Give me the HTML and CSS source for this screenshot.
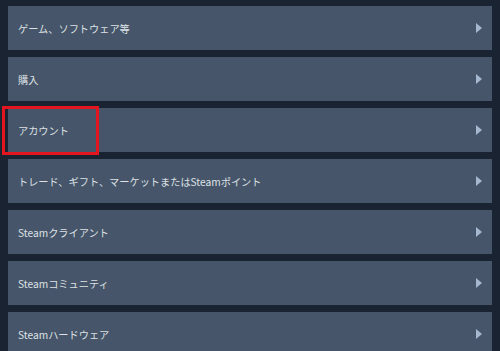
FILE: index.html
```html
<!DOCTYPE html>
<html lang="ja">
<head>
<meta charset="utf-8">
<link rel="stylesheet" href="styles.css">
</head>
<body>
<div class="list">
  <div class="row"><span class="label">ゲーム、ソフトウェア等</span><span class="arrow"></span></div>
  <div class="row"><span class="label">購入</span><span class="arrow"></span></div>
  <div class="row highlighted"><span class="label">アカウント</span><span class="arrow"></span><span class="mark"></span></div>
  <div class="row"><span class="label">トレード、ギフト、マーケットまたはSteamポイント</span><span class="arrow"></span></div>
  <div class="row"><span class="label">Steamクライアント</span><span class="arrow"></span></div>
  <div class="row"><span class="label">Steamコミュニティ</span><span class="arrow"></span></div>
  <div class="row"><span class="label">Steamハードウェア</span><span class="arrow"></span></div>
</div>
</body>
</html>
```
FILE: styles.css
```css
html, body {
  margin: 0;
  padding: 0;
  background: #1a2332;
  height: 100%;
  overflow: hidden;
}
.list {
  display: flex;
  flex-direction: column;
  gap: 7px;
  padding: 6px 8px 0 8px;
  width: 484px;
}
.row {
  position: relative;
  display: flex;
  align-items: center;
  justify-content: space-between;
  height: 44px;
  flex: 0 0 44px;
  background: #465569;
  padding: 0 10px 0 10px;
  box-sizing: border-box;
}
.label {
  font-family: "Noto Sans CJK JP", "Noto Sans", sans-serif;
  font-size: 10.2px;
  color: #dde1e5;
  white-space: nowrap;
}
.arrow {
  width: 0;
  height: 0;
  border-top: 5px solid transparent;
  border-bottom: 5px solid transparent;
  border-left: 6px solid #a5b8cf;
  margin-right: 0;
}
.mark {
  position: absolute;
  left: -6px;
  top: -2px;
  width: 97px;
  height: 49px;
  border: 3px solid #e3161f;
  box-sizing: border-box;
}
```
